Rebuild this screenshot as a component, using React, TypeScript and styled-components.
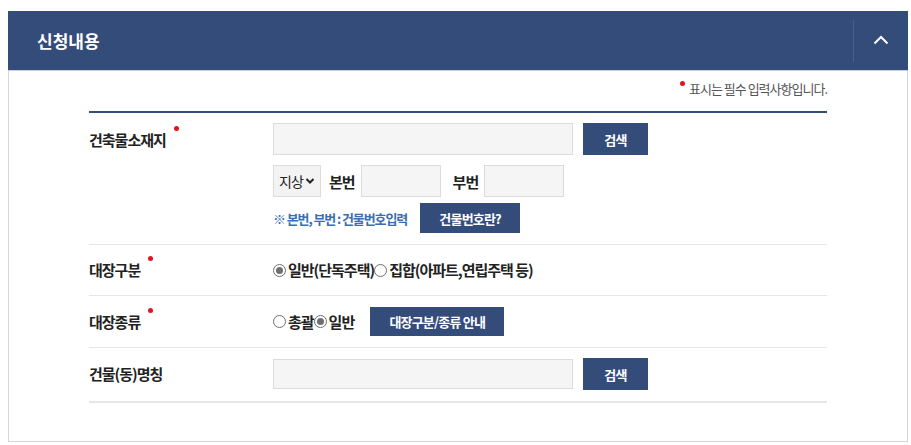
import React, { useState } from 'react';
import styled, { createGlobalStyle } from 'styled-components';

const NAVY = '#344c7a';
const FONT = '"Noto Sans CJK KR", "Noto Sans", sans-serif';

const GlobalStyle = createGlobalStyle`
  body {
    margin: 0;
    background: #fff;
    font-family: ${FONT};
    color: #222;
  }
  * {
    box-sizing: border-box;
  }
`;

type RadioOption = { value: string; label: string };

const App: React.FC = () => {
  const [open, setOpen] = useState<boolean>(true);
  const [ledgerType, setLedgerType] = useState<string>('general');
  const [ledgerKind, setLedgerKind] = useState<string>('general');

  const typeOptions: RadioOption[] = [
    { value: 'general', label: '일반(단독주택)' },
    { value: 'group', label: '집합(아파트,연립주택 등)' },
  ];
  const kindOptions: RadioOption[] = [
    { value: 'total', label: '총괄' },
    { value: 'general', label: '일반' },
  ];

  return (
    <>
      <GlobalStyle />
      <Panel>
        <Header>
          <Title>신청내용</Title>
          <ToggleButton type="button" aria-label="접기" onClick={() => setOpen(!open)}>
            <svg width="16" height="10" viewBox="0 0 16 10">
              <path d="M1.5 8.5 L8 2 L14.5 8.5" fill="none" stroke="#fff" strokeWidth="2" />
            </svg>
          </ToggleButton>
        </Header>
        {open ? (
          <Body>
            <Notice>
              <Dot $gap={0} /> 표시는 필수 입력사항입니다.
            </Notice>
            <Table>
              <Row $padTop={10} $padBottom={11}>
                <Label $top={7}>
                  건축물소재지
                  <Dot />
                </Label>
                <Field>
                  <Line $gap={10}>
                    <TextInput $width={300} type="text" />
                    <NavyButton $width={65} $height={32} type="button">
                      검색
                    </NavyButton>
                  </Line>
                  <Line $gap={8}>
                    <SelectBox>
                      지상
                      <svg width="10" height="8" viewBox="0 0 10 8">
                        <path d="M1.5 2 L5 5.5 L8.5 2" fill="none" stroke="#222" strokeWidth="2" />
                      </svg>
                    </SelectBox>
                    <SubLabel>본번</SubLabel>
                    <TextInput $width={80} type="text" />
                    <SubLabel $left={4}>부번</SubLabel>
                    <TextInput $width={80} type="text" />
                  </Line>
                  <Line $gap={13} $top={-4}>
                    <Hint>※ 본번, 부번 : 건물번호입력</Hint>
                    <NavyButton $width={100} $height={30} type="button">
                      건물번호란?
                    </NavyButton>
                  </Line>
                </Field>
              </Row>
              <Row $padTop={15} $padBottom={15} $center>
                <Label>
                  대장구분
                  <Dot />
                </Label>
                <Field>
                  <Line $gap={0}>
                    {typeOptions.map(o => (
                      <RadioLabel key={o.value}>
                        <Radio
                          type="radio"
                          name="ledgerType"
                          checked={ledgerType === o.value}
                          onChange={() => setLedgerType(o.value)}
                        />
                        {o.label}
                      </RadioLabel>
                    ))}
                  </Line>
                </Field>
              </Row>
              <Row $padTop={11} $padBottom={11} $center>
                <Label>
                  대장종류
                  <Dot />
                </Label>
                <Field>
                  <Line $gap={0}>
                    {kindOptions.map(o => (
                      <RadioLabel key={o.value}>
                        <Radio
                          type="radio"
                          name="ledgerKind"
                          checked={ledgerKind === o.value}
                          onChange={() => setLedgerKind(o.value)}
                        />
                        {o.label}
                      </RadioLabel>
                    ))}
                    <NavyButton $width={134} $height={29} $left={16} type="button">
                      대장구분/종류 안내
                    </NavyButton>
                  </Line>
                </Field>
              </Row>
              <Row $padTop={10} $padBottom={11} $center $last>
                <Label>건물(동)명칭</Label>
                <Field>
                  <Line $gap={10}>
                    <TextInput $width={300} $height={30} type="text" />
                    <NavyButton $width={65} $height={32} type="button">
                      검색
                    </NavyButton>
                  </Line>
                </Field>
              </Row>
            </Table>
          </Body>
        ) : null}
      </Panel>
    </>
  );
};

export default App;

const Panel = styled.section`
  margin: 11px 3px 0 8px;
  border: 1px solid #d6d6d6;
  border-top: none;
  height: 431px;
`;

const Header = styled.header`
  display: flex;
  align-items: stretch;
  justify-content: space-between;
  height: 60px;
  margin: 0 -1px;
  background: ${NAVY};
  border-bottom: 1px solid #c9d0dc;
`;

const Title = styled.h2`
  margin: 0;
  padding-left: 29px;
  display: flex;
  align-items: center;
  color: #fff;
  font-size: 17px;
  font-weight: 700;
  letter-spacing: 0;
`;

const ToggleButton = styled.button`
  width: 55px;
  margin: 9px 0 8px;
  border: none;
  border-left: 1px solid #4a5f88;
  background: transparent;
  display: flex;
  align-items: center;
  justify-content: center;
  padding: 0 0 2px 0;
  cursor: pointer;
`;

const Body = styled.div`
  padding: 8px 80px 0 80px;
`;

const Notice = styled.p`
  margin: 0 0 12px;
  display: flex;
  justify-content: flex-end;
  align-items: flex-start;
  gap: 4px;
  height: 20px;
  font-size: 13px;
  line-height: 20px;
  color: #555;
  letter-spacing: -1px;

  & > span {
    margin-top: 2px;
  }
`;

const Dot = styled.span<{ $gap?: number }>`
  display: inline-block;
  width: 5px;
  height: 5px;
  border-radius: 50%;
  background: #e0141e;
  margin-left: ${p => (p.$gap === undefined ? 8 : p.$gap)}px;
  align-self: flex-start;
`;

const Table = styled.div`
  border-top: 2px solid ${NAVY};
`;

const Row = styled.div<{ $padTop: number; $padBottom: number; $center?: boolean; $last?: boolean }>`
  display: flex;
  align-items: ${p => (p.$center ? 'center' : 'flex-start')};
  padding: ${p => p.$padTop}px 0 ${p => p.$padBottom}px;
  border-bottom: ${p => (p.$last ? '2px solid #e6e6e6' : '1px solid #e6e6e6')};
`;

const Label = styled.div<{ $top?: number }>`
  width: 184px;
  flex-shrink: 0;
  display: flex;
  align-items: flex-start;
  padding-top: ${p => p.$top || 0}px;
  font-size: 15px;
  font-weight: 700;
  line-height: 20px;
  letter-spacing: -1px;
  color: #222;

  & > span {
    margin-top: -4px;
  }
`;

const Field = styled.div`
  display: flex;
  flex-direction: column;
  gap: 10px;
`;

const Line = styled.div<{ $gap?: number; $top?: number }>`
  display: flex;
  align-items: center;
  gap: ${p => (p.$gap === undefined ? 11 : p.$gap)}px;
  margin-top: ${p => p.$top || 0}px;
`;

const TextInput = styled.input<{ $width: number; $height?: number }>`
  width: ${p => p.$width}px;
  height: ${p => p.$height || 32}px;
  border: 1px solid #dcdcdc;
  background: #f5f5f5;
  padding: 0 8px;
  font-family: ${FONT};
  font-size: 13px;
  outline: none;
`;

const NavyButton = styled.button<{ $width: number; $height: number; $left?: number }>`
  width: ${p => p.$width}px;
  height: ${p => p.$height}px;
  margin-left: ${p => p.$left || 0}px;
  border: none;
  background: ${NAVY};
  color: #fff;
  font-family: ${FONT};
  font-size: 13px;
  font-weight: 700;
  letter-spacing: -0.8px;
  padding: 0;
  cursor: pointer;
`;

const SelectBox = styled.div`
  width: 48px;
  height: 32px;
  border: 1px solid #dcdcdc;
  background: #f3f3f3;
  display: flex;
  align-items: center;
  gap: 2px;
  padding-left: 5px;
  font-size: 14px;
  letter-spacing: -0.8px;
  color: #222;
`;

const SubLabel = styled.span<{ $left?: number }>`
  margin-left: ${p => p.$left || 0}px;
  margin-right: -2px;
  font-size: 15px;
  font-weight: 700;
  letter-spacing: -1px;
`;

const Hint = styled.span`
  font-size: 13px;
  font-weight: 700;
  color: #3b6db3;
  letter-spacing: -1.1px;
`;

const RadioLabel = styled.label`
  display: inline-flex;
  align-items: center;
  gap: 2px;
  font-size: 15px;
  font-weight: 700;
  letter-spacing: -1px;
  color: #222;
  line-height: 20px;
  cursor: pointer;
`;

const Radio = styled.input`
  appearance: none;
  margin: 0;
  width: 13px;
  height: 13px;
  border: 1px solid #6f6f6f;
  border-radius: 50%;
  background: #fff;
  position: relative;

  &:checked::after {
    content: '';
    position: absolute;
    inset: 2px;
    border-radius: 50%;
    background: #6f6f6f;
  }
`;
